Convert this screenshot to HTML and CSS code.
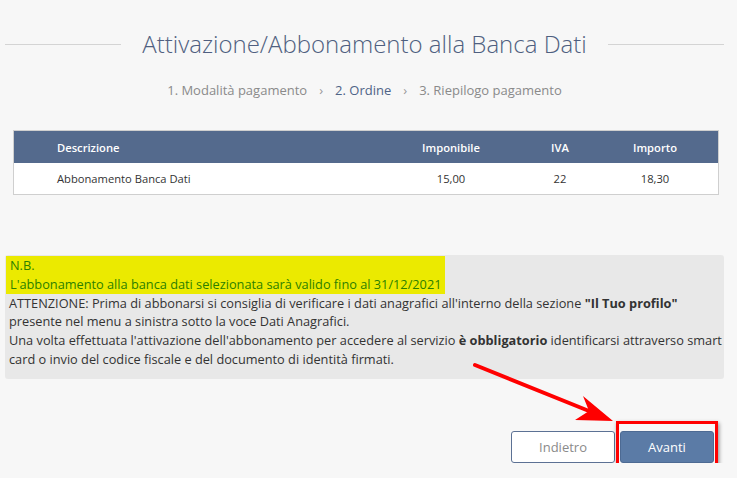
FILE: index.html
```html
<!DOCTYPE html>
<html lang="it">
<head>
  <meta charset="UTF-8">
  <meta name="viewport" content="width=device-width, initial-scale=1.0">
  <title>Attivazione/Abbonamento alla Banca Dati</title>
  <link rel="stylesheet" href="styles.css">
</head>
<body>
  <div class="page">
    <div class="title-row">
      <span class="title-line"></span>
      <h1>Attivazione/Abbonamento alla Banca Dati</h1>
      <span class="title-line"></span>
    </div>

    <div class="steps">
      <span>1. Modalità pagamento</span>
      <span class="sep">&rsaquo;</span>
      <span class="current">2. Ordine</span>
      <span class="sep">&rsaquo;</span>
      <span>3. Riepilogo pagamento</span>
    </div>

    <div class="order">
      <div class="order-row order-head">
        <div class="col-desc">Descrizione</div>
        <div>Imponibile</div>
        <div>IVA</div>
        <div>Importo</div>
      </div>
      <div class="order-row">
        <div class="col-desc">Abbonamento Banca Dati</div>
        <div>15,00</div>
        <div>22</div>
        <div>18,30</div>
      </div>
    </div>

    <div class="note">
      <div class="note-mark">
        N.B.<br>
        L'abbonamento alla banca dati selezionata sarà valido fino al 31/12/2021
      </div>
      <p>
        ATTENZIONE: Prima di abbonarsi si consiglia di verificare i dati anagrafici all'interno della sezione <b>"Il Tuo profilo"</b><br>
        presente nel menu a sinistra sotto la voce Dati Anagrafici.<br>
        Una volta effettuata l'attivazione dell'abbonamento per accedere al servizio <b>è obbligatorio</b> identificarsi attraverso smart<br>
        card o invio del codice fiscale e del documento di identità firmati.
      </p>
    </div>

    <div class="actions">
      <button class="btn btn-back">Indietro</button>
      <span class="next-wrap">
        <button class="btn btn-next">Avanti</button>
        <span class="mark-box"></span>
      </span>
      <svg class="mark-arrow" width="150" height="70" viewBox="0 0 150 70">
        <line x1="4" y1="4" x2="118" y2="50" stroke="#f00" stroke-width="4" stroke-linecap="round"/>
        <polygon points="142,60 104,59 118,50 112,35" fill="#f00"/>
      </svg>
    </div>
  </div>
</body>
</html>
```

FILE: styles.css
```css
body {
  margin: 0;
  background: #f7f7f7;
  color: #333;
  font-family: "Open Sans", Arial, sans-serif;
}

.page {
  padding: 0 13px 0 5px;
}

.title-row {
  display: flex;
  align-items: center;
  gap: 21px;
  padding-top: 28px;
}

.title-line {
  flex: 1;
  height: 1px;
  background: #d4d4d4;
}

h1 {
  margin: 0;
  font-size: 24px;
  font-weight: 300;
  color: #4f5f80;
  line-height: 32px;
}

.steps {
  display: flex;
  justify-content: center;
  gap: 12px;
  margin-top: 21px;
  font-size: 13px;
  color: #8a8a8a;
  line-height: 18px;
}

.steps .sep {
  color: #999;
}

.steps .current {
  color: #4f6487;
}

.order {
  margin: 31px 5px 0 8px;
  border: 1px solid #cfcfcf;
  background: #fff;
}

.order-row {
  display: grid;
  grid-template-columns: 1fr 110px 108px 82px;
  padding-right: 22px;
  height: 31px;
  align-items: center;
  font-size: 11.2px;
  text-align: center;
}

.order-head {
  background: #546a8d;
  color: #fff;
  font-weight: 600;
  height: 32px;
}

.order-row .col-desc {
  text-align: left;
  padding-left: 43px;
}

.note {
  margin-top: 60px;
  background: #e8e8e8;
  border-radius: 3px;
  padding: 1px 0 10px;
  font-size: 12.75px;
  line-height: 18.8px;
}

.note-mark {
  display: inline-block;
  margin-left: 1px;
  padding: 0 4px;
  background: #ebea00;
  color: #2c8000;
}

.note p {
  margin: 0;
  padding: 0 4px;
  white-space: nowrap;
}

.actions {
  position: relative;
  display: flex;
  justify-content: flex-end;
  gap: 5px;
  margin-top: 52px;
  padding-right: 10px;
}

.btn {
  width: 104px;
  height: 32px;
  border-radius: 3px;
  font-family: "Open Sans", Arial, sans-serif;
  font-size: 13px;
  cursor: pointer;
}

.btn-back {
  background: #fff;
  border: 1px solid #5c7194;
  color: #8a8a8a;
}

.btn-next {
  width: 94px;
  background: #5b7ba6;
  border: 1px solid #4d6a93;
  color: #fff;
}

.next-wrap {
  position: relative;
  display: flex;
}

.mark-box {
  position: absolute;
  left: -4px;
  right: -4px;
  top: -10px;
  bottom: -6px;
  border: 3px solid #f00;
  box-shadow: 1px 2px 4px rgba(0, 0, 0, 0.45);
}

.mark-arrow {
  position: absolute;
  left: 466px;
  top: -70px;
}
```
